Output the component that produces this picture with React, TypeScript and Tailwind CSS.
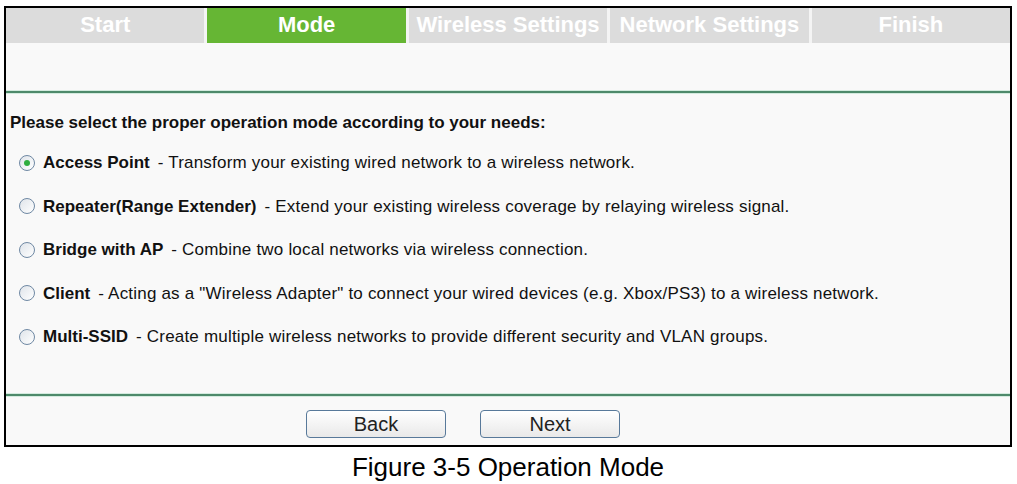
const tabs = ["Start", "Mode", "Wireless Settings", "Network Settings", "Finish"];

const modes = [
  { name: "Access Point", desc: "Transform your existing wired network to a wireless network.", checked: true },
  { name: "Repeater(Range Extender)", desc: "Extend your existing wireless coverage by relaying wireless signal." },
  { name: "Bridge with AP", desc: "Combine two local networks via wireless connection." },
  { name: "Client", desc: 'Acting as a "Wireless Adapter" to connect your wired devices (e.g. Xbox/PS3) to a wireless network.' },
  { name: "Multi-SSID", desc: "Create multiple wireless networks to provide different security and VLAN groups." },
];

function Radio({ checked }: { checked?: boolean }) {
  return (
    <span className="flex h-[16px] w-[16px] shrink-0 items-center justify-center rounded-full border-[1.5px] border-[#6f88a3] bg-gradient-to-br from-[#dfe4ea] to-white">
      {checked && <span className="h-[6px] w-[6px] rounded-full bg-[#2fae3f]" />}
    </span>
  );
}

function GreenRule() {
  return (
    <div className="border-y border-[#d4ebdf]">
      <div className="h-[2px] bg-[#4e8a6b]" />
    </div>
  );
}

function Button({ label }: { label: string }) {
  return (
    <button className="h-[28px] w-[140px] rounded-[4px] border border-[#58799a] bg-gradient-to-b from-white to-[#e9e9e9] text-[20px] leading-none text-[#222]">
      {label}
    </button>
  );
}

export default function App() {
  return (
    <div className="min-h-[484px] bg-white pl-[4px] pt-[6px] font-['Liberation_Sans',Arial,sans-serif]">
      <div className="flex h-[441px] w-[1008px] flex-col border-2 border-black bg-[#f9f9f9]">
        <div className="flex h-[35px] gap-[3px] bg-[#f4f4f4]">
          {tabs.map((t, i) => (
            <div
              key={t}
              className={`flex flex-1 items-center justify-center pb-[2px] text-[22px] font-bold text-white ${i === 1 ? "bg-[#66b634]" : "bg-[#dcdcdc]"}`}
            >
              {t}
            </div>
          ))}
        </div>
        <div className="h-[47px]" />
        <GreenRule />
        <div className="flex-1 pt-[19px]">
          <div className="pl-[4px] text-[17px] font-bold leading-[20px] text-[#111]">
            Please select the proper operation mode according to your needs:
          </div>
          <div className="mt-[8px]">
            {modes.map((m) => (
              <div key={m.name} className="flex h-[43.5px] items-center pl-[13px] text-[17px] text-[#111]">
                <Radio checked={m.checked} />
                <span className="ml-[8px] font-bold">{m.name}</span>
                <span className="ml-[8px] tracking-[0.2px]">- {m.desc}</span>
              </div>
            ))}
          </div>
        </div>
        <GreenRule />
        <div className="flex h-[48px] gap-[34px] pl-[300px] pt-[13px]">
          <Button label="Back" />
          <Button label="Next" />
        </div>
      </div>
      <div className="w-[1008px] pt-[5px] text-center text-[26px] leading-[30px] text-black">
        Figure 3-5 Operation Mode
      </div>
    </div>
  );
}
